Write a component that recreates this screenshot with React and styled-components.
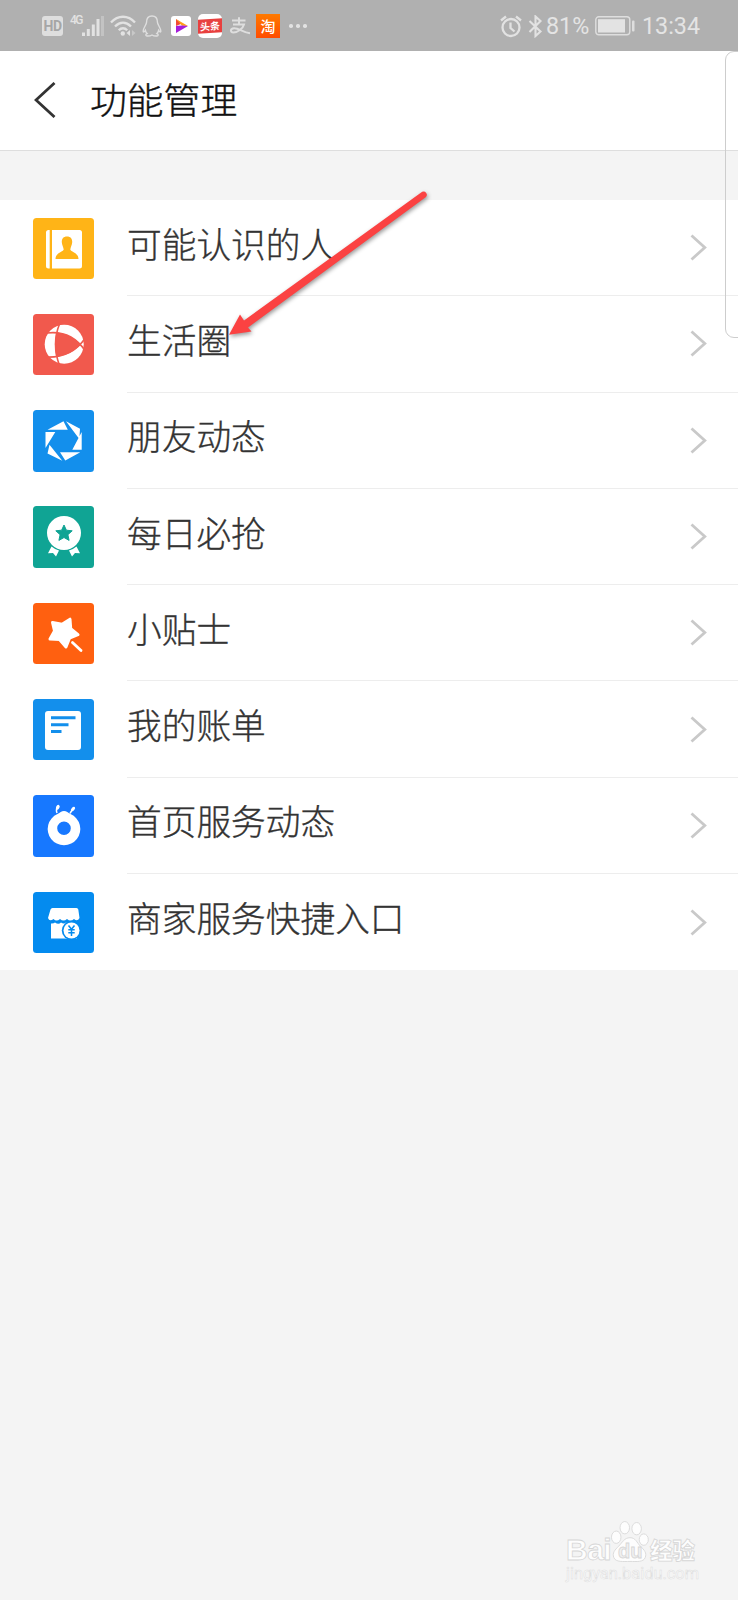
import styled, { createGlobalStyle } from "styled-components";

const items = [
  { label: "可能认识的人", color: "#ffb417", icon: ContactsIcon },
  { label: "生活圈", color: "#f1594d", icon: CircleIcon },
  { label: "朋友动态", color: "#138fec", icon: ShutterIcon },
  { label: "每日必抢", color: "#10a494", icon: MedalIcon },
  { label: "小贴士", color: "#ff6010", icon: WandIcon },
  { label: "我的账单", color: "#138fec", icon: BillIcon },
  { label: "首页服务动态", color: "#1778ff", icon: AntIcon },
  { label: "商家服务快捷入口", color: "#048bef", icon: ShopIcon },
];

export default function App() {
  return (
    <Page>
      <GlobalStyle />
      <StatusBar>
        <StatusLeft />
        <StatusRight />
      </StatusBar>

      <Header>
        <BackIcon viewBox="0 0 22 36">
          <path d="M20.5 1 2 18l18.5 17" fill="none" stroke="#333" strokeWidth="2.8" />
        </BackIcon>
        <Title>功能管理</Title>
      </Header>

      <List>
        {items.map(({ label, color, icon: Icon }) => (
          <Row key={label}>
            <Tile $color={color}>
              <Icon />
            </Tile>
            <RowBody>
              <Label>{label}</Label>
              <Chevron viewBox="0 0 17 27">
                <path d="M1.5 1.5 14.8 13.5 1.5 25.5" fill="none" stroke="#c9c9c9" strokeWidth="2.8" />
              </Chevron>
            </RowBody>
          </Row>
        ))}
      </List>

      <EdgePanel />
      <Arrow />
      <Watermark />
    </Page>
  );
}

function StatusLeft() {
  return (
    <StatusGroup>
      <HdBadge>HD</HdBadge>
      <Network>4G</Network>
      <StatusSvg $w={22} $h={22} viewBox="0 0 22 22">
        <g fill="#e2e2e2">
          <rect x="0" y="17.5" width="3" height="3.500" />
          <rect x="4.800" y="14" width="3" height="7" />
          <rect x="9.800" y="9.500" width="3" height="11.500" />
          <rect x="14.500" y="4" width="3" height="17" />
        </g>
        <rect x="19" y="1" width="3" height="20" fill="#c3c3c3" />
      </StatusSvg>
      <StatusSvg $w={26} $h={22} $ml={6} viewBox="0 0 26 22">
        <g fill="none" stroke="#e2e2e2" strokeWidth="2.3">
          <path d="M1 7.5C8-.2 18-.2 25 7.5" />
          <path d="M5 11.5c5-5 11-5 16 0" />
          <path d="M8.800 15.200c2.500-2.600 5.900-2.600 8.400 0" />
        </g>
        <circle cx="12.8" cy="18.5" r="2.2" fill="#e2e2e2" />
        <path d="M20 15v6l-3.500-3z" fill="#e2e2e2" />
        <path d="M22 15v6l3.500-3z" fill="#c8c8c8" />
      </StatusSvg>
      <StatusSvg $w={20} $h={22} $ml={6} viewBox="0 0 20 22">
        <path
          d="M10 1C6 1 4.500 4 4.500 7.500c0 2-3 5-3.300 8.500 0 1.800 1 1 2.200-.7.300 1.500.8 2.300 1.700 3.200-1.500.5-1.800 2.200-.2 2.500 2 .2 4-.3 5.100-1 1.100.7 3.100 1.200 5.100 1 1.600-.3 1.300-2-.2-2.500.9-.9 1.400-1.700 1.700-3.200 1.200 1.700 2.200 2.500 2.200.7-.3-3.500-3.300-6.500-3.300-8.500C15.500 4 14 1 10 1z"
          fill="none"
          stroke="#dedede"
          strokeWidth="1.4"
        />
      </StatusSvg>
      <StatusSvg $w={20} $h={20} $ml={9} viewBox="0 0 20 20">
        <rect width="20" height="20" rx="3" fill="#fff" />
        <path d="M5 3v7l6-2.500z" fill="#f04b36" />
        <path d="M5 3l12 7-6-.2z" fill="#ff9d18" />
        <path d="M5 10v7l12-7-6-.5z" fill="#a51dda" />
      </StatusSvg>
      <Toutiao>
        <span>头条</span>
      </Toutiao>
      <StatusSvg $w={22} $h={20} $ml={7} viewBox="0 0 22 20">
        <g fill="none" stroke="#dedede" strokeWidth="2">
          <path d="M3 4.500h13.500M10 1.200v7M4 8.500h11c-1 4-6.500 8-10.500 8-3.500-.3-3.500-4 .5-4.300 5-.2 9 4.300 16 5" />
        </g>
      </StatusSvg>
      <Taobao>淘</Taobao>
      <Dots>
        <i />
        <i />
        <i />
      </Dots>
    </StatusGroup>
  );
}

function StatusRight() {
  return (
    <StatusGroup>
      <StatusSvg $w={22} $h={23} viewBox="0 0 22 23">
        <g fill="none" stroke="#e2e2e2" strokeWidth="2.3">
          <circle cx="11" cy="12.5" r="8.500" />
          <path d="M10.500 7.500v5.500l4 3.500M1 5.500l5-4M16 1.500l5 4" />
        </g>
      </StatusSvg>
      <StatusSvg $w={15} $h={23} $ml={6} viewBox="0 0 15 23">
        <path d="M1.500 6l11 10.500-5 4.500V1.500l5 4.500-11 11" fill="none" stroke="#e2e2e2" strokeWidth="2.1" />
      </StatusSvg>
      <StatusText $ml={3} $w={43}>81%</StatusText>
      <StatusSvg $w={40} $h={20} $ml={6} viewBox="0 0 40 20">
        <rect x=".8" y=".8" width="34" height="18" rx="3" fill="none" stroke="#dedede" strokeWidth="1.4" />
        <rect x="3" y="3.2" width="27" height="13.3" fill="#e3e3e3" />
        <rect x="37" y="4.5" width="2.5" height="11" rx="1" fill="#dedede" />
      </StatusSvg>
      <StatusText $ml={7} $w={57}>13:34</StatusText>
    </StatusGroup>
  );
}

function ContactsIcon() {
  return (
    <TileSvg viewBox="0 0 61 61">
      <path d="M15.500 12h1.200v38.500h-1.200a2.500 2.500 0 0 1-2.500-2.500V14.500a2.500 2.500 0 0 1 2.500-2.500zM19 12h27.500a2.500 2.500 0 0 1 2.500 2.500V48a2.500 2.500 0 0 1-2.500 2.500H19z" />
      <path
        d="M34 18.500c3.800 0 5.400 2.500 5.200 5.800-.2 3.200-1.600 4.600-1.900 7.200 0 2 8.200 3.200 8.200 9.500H22.500c0-6.300 8.200-7.500 8.200-9.500-.3-2.600-1.700-4-1.900-7.200-.2-3.300 1.400-5.800 5.200-5.800z"
        fill="#ffb417"
      />
    </TileSvg>
  );
}

function CircleIcon() {
  return (
    <TileSvg viewBox="0 0 61 61">
      <circle cx="31.2" cy="30.3" r="19.5" />
      <path d="M23.300 18.500Q38 20 48 30.500 38 41 23.300 43 20.500 30 23.300 18.500z" fill="#f1594d" />
      <g fill="none" stroke="#f1594d" strokeWidth="1.6">
        <path d="M26.500 10Q18.500 30 26.500 51.500" />
        <path d="M14 19Q38 16 52 36.500" />
        <path d="M12 43Q38 44.500 52 24.500" />
      </g>
    </TileSvg>
  );
}

function ShutterIcon() {
  return (
    <TileSvg viewBox="0 0 61 61">
      <path d="M14.500 19.700 30.500 11.300l4.300 8.400zM33 11.300l14 7.500-.7 10.200zM48.700 22v17.800h-9.400zM47.300 42.200 32.300 50.500 27 42.200zM29.300 50.700 14.500 43.500l2-8.700zM12.500 38V22h9.800z" />
    </TileSvg>
  );
}

function MedalIcon() {
  return (
    <TileSvg viewBox="0 0 61 61">
      <circle cx="31" cy="27" r="17" />
      <path
        d="M31 19l2.400 5.200 5.800.6-4.300 3.900 1.200 5.700-5.100-2.900-5.100 2.900 1.200-5.700-4.300-3.900 5.800-.6z"
        fill="#10a494"
        stroke="#10a494"
      />
      <path d="M18.500 40.500q3.500 3 7.500 4L23 50.500l-3-3.500-5 .3zM43.500 40.500q-3.500 3-7.500 4L39 50.500l3-3.500 5 .3z" />
    </TileSvg>
  );
}

function WandIcon() {
  return (
    <TileSvg viewBox="0 0 61 61">
      <path
        d="M19.500 19.500l9.500 1.700 8-5 .7 9.500 7.300 6-8.500 3.500L33 44l-6.500-7.500-9.500-.5 4.500-8z"
        stroke="#fff"
        strokeWidth="3"
        strokeLinejoin="round"
      />
      <path d="M39.500 39.500l8.500 8" stroke="#fff" strokeWidth="2.8" strokeLinecap="round" />
    </TileSvg>
  );
}

function BillIcon() {
  return (
    <TileSvg viewBox="0 0 61 61">
      <rect x="12" y="12" width="36" height="39" rx="3" />
      <path d="M18 18.700h24.500M18 25.700h17.500M18 32.500h10.500" stroke="#138fec" strokeWidth="2.9" />
    </TileSvg>
  );
}

function AntIcon() {
  return (
    <TileSvg viewBox="0 0 61 61">
      <path
        d="M31 16c2.500 0 4 1.500 6.500 3A16.300 16.300 0 1 1 24.500 19c2.500-1.500 4-3 6.500-3zM31 26.500a6.800 6.800 0 1 0 0 13.600 6.800 6.800 0 0 0 0-13.600z"
        fillRule="evenodd"
      />
      <path d="M24 18Q22.500 14.500 25 11.500M37 18.500Q38 16 41 13.500" fill="none" stroke="#fff" strokeWidth="1.5" />
      <ellipse cx="24.8" cy="12.3" rx="1.7" ry="2.6" transform="rotate(25 24.800 12.300)" />
      <ellipse cx="40" cy="14" rx="1.5" ry="2.7" transform="rotate(40 40 14)" />
    </TileSvg>
  );
}

function ShopIcon() {
  return (
    <TileSvg viewBox="0 0 61 61">
      <path d="M19.500 16h24q1.500 0 1.800 1.500L46.500 26q-2 4-5.500 1-3.500 3.200-7 0-3.500 3.200-7 0-3.500 3.200-6.500 0-4 3-5.500-1l2.500-8.500Q18 16 19.500 16z" />
      <path d="M18 31.500q2.500.3 4-1 3.500 2.500 6 0 3 2 5 0 3 2 4 .5h7V46.500H18z" />
      <circle cx="38.5" cy="38.5" r="9.700" fill="#048bef" />
      <circle cx="38.5" cy="38.5" r="8" />
      <path d="M35.500 33.500l3 3.700 3-3.700M38.500 37v7M35.300 37.700h6.400M35.300 40.700h6.400" fill="none" stroke="#048bef" strokeWidth="1.5" />
    </TileSvg>
  );
}

function Arrow() {
  return (
    <ArrowSvg viewBox="0 0 210 160">
      <path
        d="M202.200 11.800a3.300 3.300 0 0 1 3.800 5.200L28 147.500l3.500 4-22.500 3.300 11-20.300 4 6z"
        fill="#fb4242"
      />
    </ArrowSvg>
  );
}

function Watermark() {
  return (
    <Mark>
      <MarkRow>
        <MarkLatin>Bai</MarkLatin>
        <Paw>
          <PawSvg viewBox="0 0 40 44">
            <g fill="#fdfdfd" stroke="#dadada" strokeWidth="1">
              <ellipse cx="5.5" cy="17.5" rx="5" ry="6.5" />
              <ellipse cx="14.5" cy="7.5" rx="5" ry="6.5" />
              <ellipse cx="27" cy="8.5" rx="5" ry="6.5" />
              <ellipse cx="34.500" cy="20" rx="4.8" ry="6" />
              <path d="M20 18c6 0 7 5 11 9 4 4 7 7 5 12-2 5-9 4-16 4S5 44 3 39c-2-5 1-8 5-12 4-4 6-9 12-9z" />
            </g>
          </PawSvg>
          <PawText>du</PawText>
        </Paw>
        <MarkCjk>经验</MarkCjk>
      </MarkRow>
      <MarkUrl>jingyan.baidu.com</MarkUrl>
    </Mark>
  );
}

const GlobalStyle = createGlobalStyle`
  body {
    margin: 0;
    background: #f4f4f4;
    font-family: "Noto Sans CJK SC", sans-serif;
  }
  * {
    box-sizing: border-box;
  }
`;

const Page = styled.main`
  position: relative;
  width: 738px;
  height: 1600px;
  overflow: hidden;
  background: #f4f4f4;
`;

const StatusBar = styled.div`
  display: flex;
  justify-content: space-between;
  height: 51px;
  padding: 0 39px 0 42px;
  background: #b0b0b0;
`;

const StatusGroup = styled.div`
  display: flex;
  align-items: center;
  height: 52px;
`;

const StatusSvg = styled.svg`
  flex: none;
  width: ${(p) => p.$w}px;
  height: ${(p) => p.$h}px;
  margin-left: ${(p) => p.$ml || 0}px;
`;

const StatusText = styled.span`
  width: ${(p) => p.$w}px;
  margin-left: ${(p) => p.$ml}px;
  color: #e4e4e4;
  font: 23.3px/52px Roboto, sans-serif;
  white-space: nowrap;
`;

const HdBadge = styled.span`
  width: 21px;
  height: 20px;
  border-radius: 3px;
  background: #dedede;
  color: #a6a6a6;
  font: bold 14px/21px Roboto, sans-serif;
  letter-spacing: -0.5px;
  text-align: center;
`;

const Network = styled.span`
  width: 12px;
  margin: 0 0 13px 7px;
  color: #e2e2e2;
  font: 500 12px/12px Roboto, sans-serif;
  letter-spacing: -1.5px;
`;

const Toutiao = styled.span`
  display: flex;
  align-items: center;
  width: 24px;
  height: 24px;
  margin-left: 7px;
  border-radius: 5px;
  background: #fff;

  span {
    width: 24px;
    background: #e8403f;
    color: #fff;
    font-size: 10px;
    font-weight: 700;
    line-height: 14px;
    text-align: center;
    transform: skewY(-4deg);
  }
`;

const Taobao = styled.span`
  width: 24px;
  height: 24px;
  margin-left: 5px;
  background: linear-gradient(#ff7a00, #ff4c00);
  color: #fff;
  font-size: 15px;
  font-weight: 500;
  line-height: 23px;
  text-align: center;
`;

const Dots = styled.span`
  display: flex;
  gap: 3.5px;
  margin-left: 9px;

  i {
    width: 3.5px;
    height: 3.5px;
    border-radius: 50%;
    background: #e2e2e2;
  }
`;

const Header = styled.header`
  display: flex;
  align-items: center;
  height: 100px;
  padding: 0 0 2px 34px;
  border-bottom: 1px solid #dedede;
  background: #fff;
`;

const BackIcon = styled.svg`
  width: 22px;
  height: 36px;
`;

const Title = styled.h1`
  margin: 0 0 4px 34px;
  color: #111;
  font-size: 36.8px;
  font-weight: 300;
  line-height: 54px;
  -webkit-text-stroke: 0.4px;
`;

const List = styled.ul`
  margin: 49px 0 0;
  padding: 0;
  list-style: none;
  background: #fff;
`;

const Row = styled.li`
  display: flex;
  height: 96.3px;
  padding-left: 32.5px;
`;

const Tile = styled.span`
  flex: none;
  width: 61.5px;
  height: 61.5px;
  margin-top: 17.5px;
  border-radius: 3.5px;
  background: ${(p) => p.$color};
`;

const TileSvg = styled.svg`
  display: block;
  width: 61px;
  height: 61px;
  fill: #fff;
`;

const RowBody = styled.div`
  display: flex;
  flex: 1;
  align-items: center;
  justify-content: space-between;
  margin-left: 33px;
  padding-right: 31px;
  border-bottom: 1px solid #ededed;

  ${Row}:last-child & {
    border-bottom: 0;
  }
`;

const Label = styled.span`
  margin-bottom: 10px;
  color: #333;
  font-size: 34.7px;
  font-weight: 300;
  line-height: 50px;
  -webkit-text-stroke: 0.35px;
`;

const Chevron = styled.svg`
  width: 17px;
  height: 27px;
`;

const EdgePanel = styled.div`
  position: absolute;
  top: 51px;
  left: 725px;
  width: 30px;
  height: 287px;
  border: 1px solid #cdcdcd;
  border-radius: 9px;
`;

const ArrowSvg = styled.svg`
  position: absolute;
  top: 180px;
  left: 220px;
  width: 210px;
  height: 160px;
  overflow: visible;
  filter: drop-shadow(1px 2px 2px rgba(0, 0, 0, 0.4));
`;

const Mark = styled.div`
  position: absolute;
  top: 1520px;
  left: 566px;
  width: 150px;
`;

const MarkRow = styled.div`
  display: flex;
  align-items: flex-end;
  height: 43px;
  color: #fdfdfd;
  -webkit-text-stroke: 0.8px #d6d6d6;
`;

const MarkLatin = styled.span`
  width: 45px;
  font: bold 30px/26px "Liberation Sans", sans-serif;
  letter-spacing: -0.5px;
`;

const Paw = styled.span`
  position: relative;
  width: 38px;
  height: 43px;
`;

const PawSvg = styled.svg`
  display: block;
  width: 38px;
  height: 43px;
`;

const PawText = styled.span`
  position: absolute;
  top: 20px;
  left: 7px;
  color: #f0f0f0;
  font: bold 20px/22px "Liberation Sans", sans-serif;
`;

const MarkCjk = styled.span`
  margin-left: 1px;
  font-size: 22.5px;
  font-weight: 900;
  line-height: 28px;
`;

const MarkUrl = styled.div`
  color: #fbfbfb;
  font: 16.4px/22px Roboto, sans-serif;
  -webkit-text-stroke: 0.5px #dedede;
`;
